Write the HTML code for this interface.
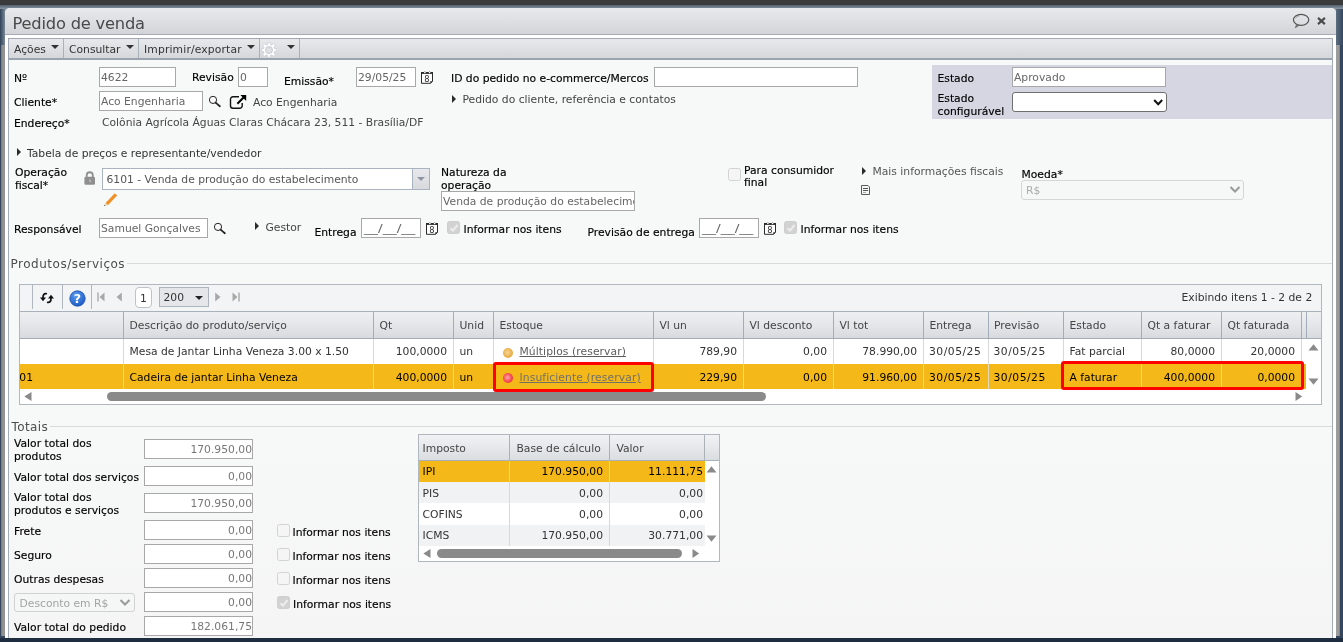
<!DOCTYPE html>
<html lang="pt-BR">
<head>
<meta charset="utf-8">
<title>Pedido de venda</title>
<style>
*{box-sizing:border-box;margin:0;padding:0}
html,body{width:1343px;height:642px;overflow:hidden}
body{position:relative;background:#34475f;font-family:"DejaVu Sans","Liberation Sans",sans-serif;font-size:10.750px;line-height:15px;color:#111}
.a{position:absolute;white-space:nowrap}
.topband{left:0;top:0;width:1343px;height:5px;background:#3b3b3b}
.topglow{left:0;top:5px;width:1343px;height:4px;background:linear-gradient(#525f6e,#8c97a3)}
.lstrip{left:1px;top:45px;width:4px;height:591px;background:linear-gradient(90deg,#6f7680,#939393 40%)}
.rstrip{left:1336px;top:45px;width:4px;height:591px;background:linear-gradient(90deg,#9c9c9c 65%,#7b7b7b)}
.lglow{left:0;top:9px;width:5px;height:36px;background:linear-gradient(90deg,#2f4258,#7b8897)}
.rglow{left:1336px;top:9px;width:7px;height:36px;background:linear-gradient(90deg,#5d6d80,#34475f)}
.bottom{left:0;top:638px;width:1343px;height:4px;background:#1f2d41}
.win{left:5px;top:8px;width:1331px;height:630px;background:#fff;border-radius:5px 5px 0 0}
.titlebar{left:5px;top:8px;width:1331px;height:27px;border-radius:5px 5px 0 0;background:linear-gradient(#e8e9eb,#dedfe2 50%,#d2d4d8);border-bottom:1px solid #a3acb6}
.title{left:12.500px;top:14px;font-family:"DejaVu Sans","Liberation Sans",sans-serif;font-size:16.300px;letter-spacing:-.2px;line-height:20px;color:#4a4a4a}
.content{left:8px;top:60px;width:1325px;height:578px;background:linear-gradient(#f7f8f8 65%,#f5f5f5);border-left:1px solid #a3acb6;border-right:1px solid #a3acb6}
.toolbar{left:8px;top:38px;width:1325px;height:22px;background:linear-gradient(#e8e9eb,#dfe0e3 50%,#d5d7da);border:1px solid #a0a9b3;border-bottom:2px solid #9ba4ae}
.tsep{top:39px;width:1px;height:19px;background:#a9b1ba}
.tb{top:42px;color:#333}
.tri{width:0;height:0;border-left:4.200px solid transparent;border-right:4.200px solid transparent;border-top:4.200px solid #333}
.lbl{color:#000;-webkit-text-stroke:.15px #000}
.g{color:#555}
.in{background:#fff;border:1px solid #a8a8a8;height:20px;color:#666;padding:2px 1px 0 1px;line-height:15px;overflow:hidden}
.r{text-align:right}
.rt{width:0;height:0;border-top:4px solid transparent;border-bottom:4px solid transparent;border-left:4.500px solid #2a2a2a}
.cb{width:13px;height:13px;border:1px solid #d3d3d3;border-radius:2.500px;background:#f6f5f6}
.cb.dc{background:#d2d2d2;border-color:#cecece}
.cb svg{position:absolute;left:-.5px;top:-.5px}
.sec{font-size:12px;letter-spacing:.4px;line-height:14px;color:#4d4d4d}
.gt{font-size:10.750px;line-height:13px}
#wrap{position:absolute;left:0;top:0;width:1343px;height:642px;will-change:transform}
</style>
</head>
<body>
<div id="wrap">
<div class="a topband"></div>
<div class="a topglow"></div>
<div class="a bottom"></div>
<div class="a lglow"></div>
<div class="a rglow"></div>
<div class="a lstrip"></div>
<div class="a rstrip"></div>
<div class="a" style="left:5px;top:8px;width:6px;height:6px;background:#8a95a2"></div><div class="a" style="left:1330px;top:8px;width:6px;height:6px;background:#8a95a2"></div>
<div class="a win"></div>
<div class="a titlebar"></div>
<div class="a title">Pedido de venda</div>
<!-- title icons -->
<svg class="a" style="left:1292px;top:13px" width="19" height="16" viewBox="0 0 19 16"><ellipse cx="9.100" cy="6.800" rx="7.700" ry="5.500" fill="none" stroke="#555" stroke-width="1.200"/><path d="M4.600 11.300L3.300 14.800 7.400 12.200z" fill="#7a7a7a" stroke="#5c5c5c" stroke-width=".6"/><path d="M3.400 5.600Q4.800 3.200 7.600 2.900" fill="none" stroke="#8a8a8a" stroke-width=".6"/></svg>
<svg class="a" style="left:1316.500px;top:17px" width="9" height="8" viewBox="0 0 9 8"><path d="M1 .9L7.900 7.100M7.900 .9L1 7.100" stroke="#4a4a4a" stroke-width="2.100" stroke-linecap="butt"/></svg>

<div class="a toolbar"></div>
<div class="a tri" style="left:51px;top:45px"></div>
<div class="a tsep" style="left:63px"></div>
<div class="a tri" style="left:126px;top:45px"></div>
<div class="a tsep" style="left:138px"></div>
<div class="a tri" style="left:247px;top:45px"></div>
<div class="a tsep" style="left:259px"></div>
<svg class="a" style="left:261px;top:42px" width="16" height="16" viewBox="0 0 16 16"><path d="M6.66 0.32L9.34 0.32L9.33 2.46L10.98 3.14L12.49 1.62L14.38 3.51L12.86 5.02L13.54 6.67L15.68 6.66L15.68 9.34L13.54 9.33L12.86 10.98L14.38 12.49L12.49 14.38L10.98 12.86L9.33 13.54L9.34 15.68L6.66 15.68L6.67 13.54L5.02 12.86L3.51 14.38L1.62 12.49L3.14 10.98L2.46 9.33L0.32 9.34L0.32 6.66L2.46 6.67L3.14 5.02L1.62 3.51L3.51 1.62L5.02 3.14L6.67 2.46z" fill="#fff" stroke="#cdd0d4" stroke-width=".9"/><circle cx="8" cy="8" r="3.500" fill="#dfe1e4" stroke="#c2c5c9" stroke-width=".9"/></svg>
<div class="a tri" style="left:287px;top:45px"></div>
<div class="a tsep" style="left:299px"></div>

<div class="a content"></div>
<svg width="0" height="0" style="position:absolute"><defs>
<g id="cal"><path d="M.5 3v10.300h9.100l1.900-2V3z" fill="#fff" stroke="#2a2a2a" stroke-width="1"/><rect x="0" y="2" width="12" height="1.800" fill="#2a2a2a"/><circle cx="3.900" cy="2.300" r=".85" fill="#fff"/><circle cx="8.600" cy="2.300" r=".85" fill="#fff"/><path d="M3.900 1.300v.5M8.600 1.300v.5" stroke="#2a2a2a" stroke-width=".9"/><path d="M9.300 13.500v-2.300h2.400z" fill="#2a2a2a"/><text x="6" y="12" font-size="9.200" font-family="DejaVu Sans Condensed,DejaVu Sans,sans-serif" text-anchor="middle" fill="#2a2a2a">8</text></g>
<g id="mag"><circle cx="6" cy="4.900" r="3.600" fill="#fafafa" stroke="#222" stroke-width="1"/><path d="M8.700 7.700L13 11.400" stroke="#222" stroke-width="1.800" stroke-linecap="round" stroke-dasharray="1.100 .35"/></g>
<g id="ext"><path d="M10 2.700H4a2.500 2.500 0 0 0-2.500 2.500v6.500a2.500 2.500 0 0 0 2.500 2.500h6.700a2.500 2.500 0 0 0 2.500-2.500V9.100" fill="none" stroke="#111" stroke-width="1.400"/><path d="M11.400 .9h5.800v6.100z" fill="#000"/><path d="M14.800 3.300L8.400 9.700" stroke="#000" stroke-width="2"/></g>
<g id="lock"><path d="M2.700 7V4.300a3.050 3.050 0 0 1 6.100 0V7" fill="none" stroke="#8f8f8f" stroke-width="1.800"/><rect x=".4" y="5.700" width="10.600" height="8.100" rx="1.400" fill="#8f8f8f"/><path d="M5 8.700h1.500v2.600h-.8v-1.700z" fill="#e4e4e4"/></g>
<g id="pen"><path d="M2.500 11L11.800 1.200 14.200 3.600 4.900 13.300z" fill="#f0922a"/><path d="M2.500 11L1 14l3.900-.7z" fill="#f0d8b0"/><path d="M1 14l.6-1.300.9.900z" fill="#333"/></g>
</defs></svg>
<!-- row 1 -->
<div class="a lbl" style="left:14px;top:71px">Nº</div>
<div class="a in" style="left:99px;top:67px;width:77px">4622</div>
<div class="a lbl" style="left:192px;top:70px">Revisão</div>
<div class="a in" style="left:238px;top:67px;width:30px">0</div>
<div class="a lbl" style="left:284px;top:74px">Emissão*</div>
<div class="a in" style="left:356px;top:67px;width:60px">29/05/25</div>
<svg class="a cal" style="left:421px;top:70px" width="12" height="14" viewBox="0 0 12 14"><use href="#cal"/></svg>
<div class="a lbl" style="left:451px;top:71px">ID do pedido no e-commerce/Mercos</div>
<div class="a in" style="left:654px;top:67px;width:204px"></div>
<!-- state box -->
<div class="a" style="left:932px;top:65px;width:400px;height:54px;background:#d6d6e3"></div>
<div class="a lbl" style="left:937.500px;top:71px">Estado</div>
<div class="a in" style="left:1012px;top:67px;width:154px">Aprovado</div>
<div class="a lbl" style="left:937.500px;top:91.500px;line-height:13px">Estado<br>configurável</div>
<div class="a" style="left:1012px;top:92px;width:155px;height:20px;background:#fff;border:1px solid #6f6f6f;border-radius:3px"></div>
<svg class="a" style="left:1152px;top:98px" width="12" height="9" viewBox="0 0 12 9"><path d="M2.200 2L6.200 6.200L10.200 2" fill="none" stroke="#111" stroke-width="2"/></svg>
<!-- row 2 -->
<div class="a lbl" style="left:14px;top:95px">Cliente*</div>
<div class="a in" style="left:99px;top:91px;width:104px">Aco Engenharia</div>
<svg class="a" style="left:207px;top:95px" width="15" height="13" viewBox="0 0 15 13"><use href="#mag"/></svg>
<svg class="a" style="left:229px;top:94px" width="18" height="16" viewBox="0 0 18 16"><use href="#ext"/></svg>
<div class="a g" style="left:253px;top:95px;color:#444">Aco Engenharia</div>
<div class="a rt" style="left:452px;top:95px"></div>
<div class="a" style="left:462.500px;top:92px;color:#444">Pedido do cliente, referência e contatos</div>
<!-- row 3 -->
<div class="a lbl" style="left:14px;top:116px">Endereço*</div>
<div class="a" style="left:102px;top:115px;color:#444">Colônia Agrícola Águas Claras Chácara 23, 511 - Brasília/DF</div>
<!-- row 4 -->
<div class="a rt" style="left:17px;top:148px"></div>
<div class="a" style="left:27px;top:146px;color:#333">Tabela de preços e representante/vendedor</div>
<div class="a lbl" style="left:15px;top:166px;line-height:13px">Operação<br>fiscal*</div>
<svg class="a" style="left:83.500px;top:171px" width="12" height="15" viewBox="0 0 12 15"><use href="#lock"/></svg>
<div class="a" style="left:102px;top:168px;width:328px;height:22px;background:#fff;border:1px solid #a9b4c0;color:#555;padding:3px 0 0 3.500px">6101 - Venda de produção do estabelecimento</div>
<div class="a" style="left:412px;top:169px;width:17px;height:20px;border-left:1px solid #a9b4c0;background:linear-gradient(#e8e9ec,#d7d9dd)"></div>
<div class="a tri" style="left:416.800px;top:177.200px;border-top-color:#8e96a3;border-left-width:4.200px;border-right-width:4.200px;border-top-width:4.100px"></div>
<svg class="a" style="left:103px;top:192px" width="15" height="15" viewBox="0 0 15 15"><use href="#pen"/></svg>
<div class="a lbl" style="left:441px;top:166px;line-height:13px">Natureza da<br>operação</div>
<div class="a in" style="left:441px;top:191px;width:194px">Venda de produção do estabelecimento</div>
<div class="a cb" style="left:728px;top:168px"></div>
<div class="a lbl" style="left:744px;top:164.500px;line-height:12px">Para consumidor<br>final</div>
<div class="a rt" style="left:862px;top:167px"></div>
<div class="a" style="left:872.500px;top:164px;color:#555">Mais informações fiscais</div>
<svg class="a" style="left:861px;top:185px" width="9" height="10" viewBox="0 0 9 10"><path d="M.5 .5h6.500l1.500 1.500v7.500h-8z" fill="#f6f6f6" stroke="#5a5a5a" stroke-width="1"/><path d="M2 3.500h5M2 5.500h5" stroke="#555" stroke-width="1"/><path d="M2 7.500h3" stroke="#aaa" stroke-width="1"/></svg>
<div class="a lbl" style="left:1021.500px;top:167px">Moeda*</div>
<div class="a" style="left:1021px;top:180px;width:223px;height:20px;background:#f6f7f7;border:1px solid #d6d6d6;border-radius:3px;color:#ababab;padding:2px 0 0 4px">R$</div>
<svg class="a" style="left:1229px;top:185px" width="12" height="9" viewBox="0 0 12 9"><path d="M1.500 2L6 6.500L10.500 2" fill="none" stroke="#9a9a9a" stroke-width="2"/></svg>
<!-- row 5 -->
<div class="a lbl" style="left:14px;top:222px">Responsável</div>
<div class="a in" style="left:99px;top:218px;width:109px">Samuel Gonçalves</div>
<svg class="a" style="left:212px;top:222px" width="15" height="13" viewBox="0 0 15 13"><use href="#mag"/></svg>
<div class="a rt" style="left:255px;top:222px"></div>
<div class="a" style="left:265.500px;top:220px;color:#444">Gestor</div>
<div class="a lbl" style="left:314.500px;top:225px">Entrega</div>
<div class="a in" style="left:361px;top:218px;width:60px;padding-left:2px"><span style="display:inline-block;transform:scaleX(1.3);transform-origin:0 0">__/__/__</span></div>
<svg class="a cal" style="left:426px;top:221px" width="12" height="14" viewBox="0 0 12 14"><use href="#cal"/></svg>
<div class="a cb dc" style="left:447px;top:221px"><svg width="12" height="12" viewBox="0 0 12 12"><path d="M2.500 6.200L5 8.600L9.500 3" fill="none" stroke="#ededed" stroke-width="2"/></svg></div>
<div class="a lbl" style="left:463.500px;top:222px">Informar nos itens</div>
<div class="a lbl" style="left:587.500px;top:225px">Previsão de entrega</div>
<div class="a in" style="left:699px;top:218px;width:60px;padding-left:2px"><span style="display:inline-block;transform:scaleX(1.3);transform-origin:0 0">__/__/__</span></div>
<svg class="a cal" style="left:764px;top:221px" width="12" height="14" viewBox="0 0 12 14"><use href="#cal"/></svg>
<div class="a cb dc" style="left:784px;top:221px"><svg width="12" height="12" viewBox="0 0 12 12"><path d="M2.500 6.200L5 8.600L9.500 3" fill="none" stroke="#ededed" stroke-width="2"/></svg></div>
<div class="a lbl" style="left:800.500px;top:222px">Informar nos itens</div>
<!-- section products -->
<div class="a" style="left:127px;top:263px;width:1205px;height:1px;background:#d9dadb"></div>
<div class="a sec" style="left:10.500px;top:257px;letter-spacing:.52px">Produtos/serviços</div>
<!-- grid -->
<div class="a" style="left:19px;top:284px;width:1303px;height:121px;background:#fff;border:1px solid #b0b7bf"></div>
<div class="a" style="left:20px;top:285px;width:1301px;height:26px;background:#f3f4f5"></div>
<div class="a" style="left:20px;top:311px;width:1301px;height:28px;background:linear-gradient(#eeeff1,#e4e6e9 50%,#d8dade);border-top:1px solid #a9b1bb;border-bottom:1px solid #a3acb6"></div>
<div class="a" style="left:20px;top:364px;width:1286px;height:25px;background:#f4b818"></div>
<div class="a" style="left:32px;top:285px;width:1px;height:24px;background:#b0b7bf"></div>
<div class="a" style="left:62px;top:285px;width:1px;height:24px;background:#b0b7bf"></div>
<div class="a" style="left:91px;top:285px;width:1px;height:24px;background:#b0b7bf"></div>
<svg class="a" style="left:40px;top:292px" width="14" height="12" viewBox="0 0 14 12"><path d="M7 1.800C4.200 1 2.800 2.600 3 6" fill="none" stroke="#111" stroke-width="1.700"/><path d="M0 5.500h6L3 9.300z" fill="#111"/><path d="M7 10.200c2.800.8 4.200-.8 4-4.200" fill="none" stroke="#111" stroke-width="1.700"/><path d="M8 6.500h6L11 2.700z" fill="#111"/></svg>
<svg class="a" style="left:68.500px;top:289.500px" width="17" height="17" viewBox="0 0 17 17"><defs><radialGradient id="hg" cx="40%" cy="30%" r="75%"><stop offset="0" stop-color="#5a9cf0"/><stop offset="1" stop-color="#1a57c2"/></radialGradient></defs><circle cx="8.500" cy="8.500" r="7.700" fill="url(#hg)" stroke="#1b4fae" stroke-width=".8"/><text x="8.500" y="13" font-size="12.500" font-weight="bold" font-family="DejaVu Sans,Liberation Sans,sans-serif" text-anchor="middle" fill="#fff">?</text></svg>
<svg class="a" style="left:97px;top:292px" width="8" height="10" viewBox="0 0 8 10"><path d="M1 .5v9" stroke="#a8a8a8" stroke-width="1.400"/><path d="M7.500 .5v9L2.500 5z" fill="#a8a8a8"/></svg>
<svg class="a" style="left:116px;top:292px" width="6" height="10" viewBox="0 0 6 10"><path d="M5.800 .5v9L.5 5z" fill="#a8a8a8"/></svg>
<div class="a gt" style="left:135px;top:287px;width:17px;height:21px;background:#fff;border:1px solid #bfc3c8;border-radius:4px;text-align:center;padding-top:4px;color:#333">1</div>
<div class="a gt" style="left:159px;top:287px;width:50px;height:20px;background:#e4e6e9;border:1px solid #aeb4bb;color:#333;padding:3px 0 0 3.500px">200</div>
<div class="a tri" style="left:195px;top:296px;border-left-width:4.500px;border-right-width:4.500px;border-top-width:4.500px;border-top-color:#222"></div>
<svg class="a" style="left:215px;top:292px" width="6" height="10" viewBox="0 0 6 10"><path d="M.2 .5v9L5.500 5z" fill="#a8a8a8"/></svg>
<svg class="a" style="left:232px;top:292px" width="8" height="10" viewBox="0 0 8 10"><path d="M7 .5v9" stroke="#a8a8a8" stroke-width="1.400"/><path d="M.5 .5v9L5.500 5z" fill="#a8a8a8"/></svg>
<div class="a gt" style="left:1181.500px;top:291px;color:#333">Exibindo itens 1 - 2 de 2</div>
<div class="a" style="left:123px;top:312px;width:1px;height:26px;background:#a3acb8"></div>
<div class="a" style="left:373px;top:312px;width:1px;height:26px;background:#a3acb8"></div>
<div class="a" style="left:453px;top:312px;width:1px;height:26px;background:#a3acb8"></div>
<div class="a" style="left:493px;top:312px;width:1px;height:26px;background:#a3acb8"></div>
<div class="a" style="left:653px;top:312px;width:1px;height:26px;background:#a3acb8"></div>
<div class="a" style="left:743px;top:312px;width:1px;height:26px;background:#a3acb8"></div>
<div class="a" style="left:833px;top:312px;width:1px;height:26px;background:#a3acb8"></div>
<div class="a" style="left:923px;top:312px;width:1px;height:26px;background:#a3acb8"></div>
<div class="a" style="left:988px;top:312px;width:1px;height:26px;background:#a3acb8"></div>
<div class="a" style="left:1063px;top:312px;width:1px;height:26px;background:#a3acb8"></div>
<div class="a" style="left:1141px;top:312px;width:1px;height:26px;background:#a3acb8"></div>
<div class="a" style="left:1221px;top:312px;width:1px;height:26px;background:#a3acb8"></div>
<div class="a" style="left:1301px;top:312px;width:1px;height:26px;background:#a3acb8"></div>
<div class="a" style="left:1306px;top:312px;width:1px;height:26px;background:#a3acb8"></div>
<div class="a" style="left:123px;top:339px;width:1px;height:25px;background:#d5d9de"></div>
<div class="a" style="left:123px;top:364px;width:1px;height:25px;background:#e4d9b8"></div>
<div class="a" style="left:373px;top:339px;width:1px;height:25px;background:#d5d9de"></div>
<div class="a" style="left:373px;top:364px;width:1px;height:25px;background:#e4d9b8"></div>
<div class="a" style="left:453px;top:339px;width:1px;height:25px;background:#d5d9de"></div>
<div class="a" style="left:453px;top:364px;width:1px;height:25px;background:#e4d9b8"></div>
<div class="a" style="left:493px;top:339px;width:1px;height:25px;background:#d5d9de"></div>
<div class="a" style="left:493px;top:364px;width:1px;height:25px;background:#e4d9b8"></div>
<div class="a" style="left:653px;top:339px;width:1px;height:25px;background:#d5d9de"></div>
<div class="a" style="left:653px;top:364px;width:1px;height:25px;background:#e4d9b8"></div>
<div class="a" style="left:743px;top:339px;width:1px;height:25px;background:#d5d9de"></div>
<div class="a" style="left:743px;top:364px;width:1px;height:25px;background:#e4d9b8"></div>
<div class="a" style="left:833px;top:339px;width:1px;height:25px;background:#d5d9de"></div>
<div class="a" style="left:833px;top:364px;width:1px;height:25px;background:#e4d9b8"></div>
<div class="a" style="left:923px;top:339px;width:1px;height:25px;background:#d5d9de"></div>
<div class="a" style="left:923px;top:364px;width:1px;height:25px;background:#e4d9b8"></div>
<div class="a" style="left:988px;top:339px;width:1px;height:25px;background:#d5d9de"></div>
<div class="a" style="left:988px;top:364px;width:1px;height:25px;background:#e4d9b8"></div>
<div class="a" style="left:1063px;top:339px;width:1px;height:25px;background:#d5d9de"></div>
<div class="a" style="left:1063px;top:364px;width:1px;height:25px;background:#e4d9b8"></div>
<div class="a" style="left:1141px;top:339px;width:1px;height:25px;background:#d5d9de"></div>
<div class="a" style="left:1141px;top:364px;width:1px;height:25px;background:#e4d9b8"></div>
<div class="a" style="left:1221px;top:339px;width:1px;height:25px;background:#d5d9de"></div>
<div class="a" style="left:1221px;top:364px;width:1px;height:25px;background:#e4d9b8"></div>
<div class="a" style="left:1301px;top:339px;width:1px;height:25px;background:#d5d9de"></div>
<div class="a" style="left:1301px;top:364px;width:1px;height:25px;background:#e4d9b8"></div>
<div class="a gt" style="left:129.5px;top:319px;color:#444">Descrição do produto/serviço</div>
<div class="a gt" style="left:379.5px;top:319px;color:#444">Qt</div>
<div class="a gt" style="left:459.5px;top:319px;color:#444">Unid</div>
<div class="a gt" style="left:499.5px;top:319px;color:#444">Estoque</div>
<div class="a gt" style="left:659.5px;top:319px;color:#444">Vl un</div>
<div class="a gt" style="left:749.5px;top:319px;color:#444">Vl desconto</div>
<div class="a gt" style="left:839.5px;top:319px;color:#444">Vl tot</div>
<div class="a gt" style="left:929.5px;top:319px;color:#444">Entrega</div>
<div class="a gt" style="left:994px;top:319px;color:#444">Previsão</div>
<div class="a gt" style="left:1069.5px;top:319px;color:#444">Estado</div>
<div class="a gt" style="left:1147.5px;top:319px;color:#444">Qt a faturar</div>
<div class="a gt" style="left:1227.5px;top:319px;color:#444">Qt faturada</div>
<div class="a gt" style="left:129.5px;top:345px;color:#333">Mesa de Jantar Linha Veneza 3.00 x 1.50</div>
<div class="a gt r" style="left:347px;width:100px;top:345px;color:#333">100,0000</div>
<div class="a gt" style="left:459.5px;top:345px;color:#333">un</div>
<div class="a gt r" style="left:637px;width:100px;top:345px;color:#333">789,90</div>
<div class="a gt r" style="left:727px;width:100px;top:345px;color:#333">0,00</div>
<div class="a gt r" style="left:817px;width:100px;top:345px;color:#333">78.990,00</div>
<div class="a gt" style="left:929px;top:345px;color:#333;letter-spacing:.5px">30/05/25</div>
<div class="a gt" style="left:993.5px;top:345px;color:#333;letter-spacing:.5px">30/05/25</div>
<div class="a gt" style="left:1069.5px;top:345px;color:#333">Fat parcial</div>
<div class="a gt r" style="left:1115px;width:100px;top:345px;color:#333">80,0000</div>
<div class="a gt r" style="left:1195px;width:100px;top:345px;color:#333">20,0000</div>
<div class="a gt" style="left:129.5px;top:370.5px;color:#000">Cadeira de jantar Linha Veneza</div>
<div class="a gt r" style="left:347px;width:100px;top:370.5px;color:#000">400,0000</div>
<div class="a gt" style="left:459.5px;top:370.5px;color:#000">un</div>
<div class="a gt r" style="left:637px;width:100px;top:370.5px;color:#000">229,90</div>
<div class="a gt r" style="left:727px;width:100px;top:370.5px;color:#000">0,00</div>
<div class="a gt r" style="left:817px;width:100px;top:370.5px;color:#000">91.960,00</div>
<div class="a gt" style="left:929px;top:370.5px;color:#000;letter-spacing:.5px">30/05/25</div>
<div class="a gt" style="left:993.5px;top:370.5px;color:#000;letter-spacing:.5px">30/05/25</div>
<div class="a gt" style="left:1069.5px;top:370.5px;color:#000">A faturar</div>
<div class="a gt r" style="left:1115px;width:100px;top:370.5px;color:#000">400,0000</div>
<div class="a gt r" style="left:1195px;width:100px;top:370.5px;color:#000">0,0000</div>
<div class="a gt" style="left:19px;top:370.5px;width:14px;overflow:hidden;color:#000;direction:rtl">001</div>
<div class="a" style="left:503px;top:348px;width:10px;height:10px;border-radius:5px;background:radial-gradient(circle at 45% 45%,#f6d695,#e9b04a 60%,#e3a53a)"></div>
<div class="a" style="left:503px;top:373px;width:10px;height:10px;border-radius:5px;background:radial-gradient(circle at 45% 45%,#ffa5a5,#f4404a 60%,#ee3038)"></div>
<div class="a gt" style="left:519.5px;top:345px;color:#5c5c5c;text-decoration:underline;letter-spacing:.08px">Múltiplos (reservar)</div>
<div class="a gt" style="left:519.5px;top:370.5px;color:#73706a;text-decoration:underline;letter-spacing:.1px">Insuficiente (reservar)</div>
<div class="a" style="left:493px;top:362px;width:161px;height:30px;border:3px solid #f00;border-radius:3px"></div>
<div class="a" style="left:1061px;top:361px;width:243px;height:29px;border:3px solid #f00;border-radius:3px"></div>
<div class="a" style="left:107px;top:392px;width:659px;height:9px;border-radius:4.500px;background:#8a8a8a"></div>
<svg class="a" style="left:24px;top:392px" width="8" height="9" viewBox="0 0 8 9"><path d="M7.500 0v9L.3 4.500z" fill="#8a8a8a"/></svg>
<svg class="a" style="left:1295px;top:392px" width="8" height="9" viewBox="0 0 8 9"><path d="M.5 0v9L7.200 4.500z" fill="#8a8a8a"/></svg>
<svg class="a" style="left:1308px;top:344px" width="11" height="7" viewBox="0 0 11 7"><path d="M.5 6.500h10L5.500 .3z" fill="#8a8a8a"/></svg>
<svg class="a" style="left:1308px;top:378px" width="11" height="7" viewBox="0 0 11 7"><path d="M.5 .5h10L5.500 6.700z" fill="#8a8a8a"/></svg>
<!-- totais -->
<div class="a" style="left:50px;top:426px;width:1282px;height:1px;background:#d9dadb"></div>
<div class="a sec" style="left:11.500px;top:420px">Totais</div>
<div class="a lbl" style="left:14px;top:436.500px;line-height:13px">Valor total dos<br>produtos</div>
<div class="a lbl" style="left:14px;top:470px">Valor total dos serviços</div>
<div class="a lbl" style="left:14px;top:490.500px;line-height:13px">Valor total dos<br>produtos e serviços</div>
<div class="a lbl" style="left:14px;top:524px">Frete</div>
<div class="a lbl" style="left:14px;top:548px">Seguro</div>
<div class="a lbl" style="left:14px;top:572px">Outras despesas</div>
<div class="a lbl" style="left:14px;top:620px">Valor total do pedido</div>
<div class="a in r" style="left:144px;top:439px;width:109px;color:#777;padding-right:0">170.950,00</div>
<div class="a in r" style="left:144px;top:466px;width:109px;color:#777;padding-right:0">0,00</div>
<div class="a in r" style="left:144px;top:493px;width:109px;color:#777;padding-right:0">170.950,00</div>
<div class="a in r" style="left:144px;top:520px;width:109px;color:#777;padding-right:0">0,00</div>
<div class="a in r" style="left:144px;top:544px;width:109px;color:#777;padding-right:0">0,00</div>
<div class="a in r" style="left:144px;top:568px;width:109px;color:#777;padding-right:0">0,00</div>
<div class="a in r" style="left:144px;top:592px;width:109px;color:#777;padding-right:0">0,00</div>
<div class="a in r" style="left:144px;top:616px;width:109px;color:#777;padding-right:0">182.061,75</div>
<div class="a" style="left:14px;top:593px;width:121px;height:19px;background:#f5f6f6;border:1px solid #d2d2d2;border-radius:3px;color:#a3a3a3;padding:1.500px 0 0 4.500px">Desconto em R$</div>
<svg class="a" style="left:119px;top:598px" width="12" height="9" viewBox="0 0 12 9"><path d="M1.500 2L6 6.500L10.500 2" fill="none" stroke="#9a9a9a" stroke-width="2"/></svg>
<div class="a cb" style="left:276.500px;top:524px"></div>
<div class="a lbl" style="left:292.500px;top:525px">Informar nos itens</div>
<div class="a cb" style="left:276.500px;top:548px"></div>
<div class="a lbl" style="left:292.500px;top:549px">Informar nos itens</div>
<div class="a cb" style="left:276.500px;top:572px"></div>
<div class="a lbl" style="left:292.500px;top:573px">Informar nos itens</div>
<div class="a cb dc" style="left:277px;top:596px"><svg width="12" height="12" viewBox="0 0 12 12"><path d="M2.500 6.200L5 8.600L9.500 3" fill="none" stroke="#ededed" stroke-width="2"/></svg></div>
<div class="a lbl" style="left:293px;top:597px">Informar nos itens</div>
<!-- tax -->
<div class="a" style="left:418px;top:434px;width:302px;height:128px;background:#fff;border:1px solid #b0b7bf"></div>
<div class="a" style="left:419px;top:435px;width:300px;height:26px;background:linear-gradient(#f1f2f4,#e6e8eb 50%,#dadde1);border-bottom:1px solid #a9b0b8"></div>
<div class="a" style="left:419px;top:461px;width:286px;height:21px;background:#f4b818"></div>
<div class="a" style="left:419px;top:482px;width:286px;height:21px;background:#f1f2f4"></div>
<div class="a" style="left:419px;top:525px;width:286px;height:21px;background:#f1f2f4"></div>
<div class="a" style="left:509px;top:435px;width:1px;height:25px;background:#aab1b9"></div>
<div class="a" style="left:609px;top:435px;width:1px;height:25px;background:#aab1b9"></div>
<div class="a" style="left:704px;top:435px;width:1px;height:25px;background:#aab1b9"></div>
<div class="a" style="left:509px;top:482px;width:1px;height:64px;background:#d5d9de"></div>
<div class="a" style="left:509px;top:461px;width:1px;height:21px;background:#e4d9b8"></div>
<div class="a" style="left:609px;top:482px;width:1px;height:64px;background:#d5d9de"></div>
<div class="a" style="left:609px;top:461px;width:1px;height:21px;background:#e4d9b8"></div>
<div class="a gt" style="left:422.5px;top:442px;color:#444">Imposto</div>
<div class="a gt" style="left:516.5px;top:442px;color:#444">Base de cálculo</div>
<div class="a gt" style="left:616.5px;top:442px;color:#444">Valor</div>
<div class="a gt" style="left:422.5px;top:465px;color:#000">IPI</div>
<div class="a gt r" style="left:503px;width:100px;top:465px;color:#000">170.950,00</div>
<div class="a gt r" style="left:603px;width:100px;top:465px;color:#000">11.111,75</div>
<div class="a gt" style="left:422.5px;top:486.500px;color:#333">PIS</div>
<div class="a gt r" style="left:503px;width:100px;top:486.500px;color:#333">0,00</div>
<div class="a gt r" style="left:603px;width:100px;top:486.500px;color:#333">0,00</div>
<div class="a gt" style="left:422.5px;top:507.500px;color:#333">COFINS</div>
<div class="a gt r" style="left:503px;width:100px;top:507.500px;color:#333">0,00</div>
<div class="a gt r" style="left:603px;width:100px;top:507.500px;color:#333">0,00</div>
<div class="a gt" style="left:422.5px;top:528.500px;color:#333">ICMS</div>
<div class="a gt r" style="left:503px;width:100px;top:528.500px;color:#333">170.950,00</div>
<div class="a gt r" style="left:603px;width:100px;top:528.500px;color:#333">30.771,00</div>
<div class="a" style="left:437px;top:549px;width:245px;height:9px;border-radius:4.500px;background:#8a8a8a"></div>
<svg class="a" style="left:423px;top:549px" width="8" height="9" viewBox="0 0 8 9"><path d="M7.500 0v9L.3 4.500z" fill="#8a8a8a"/></svg>
<svg class="a" style="left:692px;top:549px" width="8" height="9" viewBox="0 0 8 9"><path d="M.5 0v9L7.200 4.500z" fill="#8a8a8a"/></svg>
<svg class="a" style="left:706px;top:466px" width="11" height="7" viewBox="0 0 11 7"><path d="M.5 6.500h10L5.500 .3z" fill="#8a8a8a"/></svg>
<svg class="a" style="left:706px;top:535px" width="11" height="7" viewBox="0 0 11 7"><path d="M.5 .5h10L5.500 6.700z" fill="#8a8a8a"/></svg>
<!--CONTENT3-->
</div>
<div class="a tb" style="left:14px">Ações</div>
<div class="a tb" style="left:69px">Consultar</div>
<div class="a tb" style="left:144px;letter-spacing:.15px">Imprimir/exportar</div>
</body>
</html>
